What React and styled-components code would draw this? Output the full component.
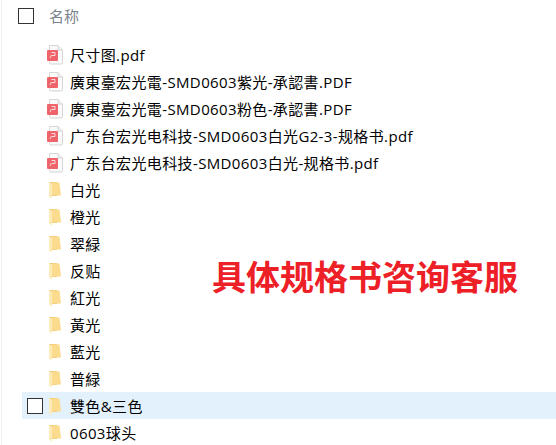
import React from 'react';
import styled, { createGlobalStyle } from 'styled-components';

const Global = createGlobalStyle`
    html, body {
        margin: 0;
        padding: 0;
        background: #fff;
    }
`;

const Page = styled.div`
    position: relative;
    width: 555px;
    height: 445px;
    overflow: hidden;
    box-sizing: border-box;
    border-left: 1px solid #f0f0f0;
    margin-left: 1px;
    font-family: "Open Sans", "Noto Sans CJK SC", sans-serif;
`;

const Header = styled.div`
    height: 41px;
    box-sizing: border-box;
    padding: 8px 0 0 16px;
    display: flex;
    align-items: flex-start;
    gap: 15px;
`;

const Check = styled.span`
    display: block;
    flex: none;
    width: 16px;
    height: 16px;
    box-sizing: border-box;
    border: 1px solid #333;
    background: #fff;
`;

const HeaderLabel = styled.span`
    font-size: 15px;
    line-height: 17px;
    color: #7b838c;
`;

const List = styled.div`
    margin-left: 20px;
`;

const Row = styled.div`
    position: relative;
    height: 27px;
    display: flex;
    align-items: center;
    padding-left: 25px;
    gap: 7px;
    background: ${(p) => (p.$active ? '#e3f1fc' : 'transparent')};
    font-size: 15px;
    letter-spacing: .37px;
    color: #000;
`;

const RowCheck = styled(Check)`
    position: absolute;
    left: 5px;
    top: 6px;
`;

const IconSlot = styled.span`
    flex: none;
    width: 16px;
    height: 20px;
    display: flex;
`;

const Name = styled.span`
    white-space: nowrap;
    line-height: 20px;
`;

const Notice = styled.div`
    position: absolute;
    left: 210px;
    top: 254px;
    font-family: "Noto Sans CJK SC", sans-serif;
    font-size: 34px;
    line-height: 44px;
    font-weight: 700;
    color: #ee2027;
    white-space: nowrap;
`;

const PdfIcon = () => (
    <svg width="16" height="20" viewBox="0 0 16 20">
        <path d="M2.5 .5H11L15.5 5V17.5a1.5 1.5 0 0 1-1.5 1.5H4A1.5 1.5 0 0 1 2.5 17.5Z" fill="#fafafa" stroke="#d6d6d6" />
        <path d="M11 .5V5H15.5" fill="#eee" stroke="#d6d6d6" />
        <rect x="0" y="5" width="11" height="11" rx="1" fill="#ef636b" />
        <path d="M4.5 7.5h3.5v3H5M3 13l1.5-3" fill="none" stroke="#fbdcde" strokeWidth="1" />
    </svg>
);

const FolderIcon = () => (
    <svg width="16" height="20" viewBox="0 0 16 20">
        <path d="M2 2H10V16H2Z" fill="#eec46c" />
        <path d="M5 2.5H12.5L14 15.5H5Z" fill="#fbdc8e" />
        <path d="M2 2L5 3.5V18.5L2 16.5Z" fill="#fcebb8" />
    </svg>
);

const files = [
    { type: 'pdf', name: '尺寸图.pdf' },
    { type: 'pdf', name: '廣東臺宏光電-SMD0603紫光-承認書.PDF' },
    { type: 'pdf', name: '廣東臺宏光電-SMD0603粉色-承認書.PDF' },
    { type: 'pdf', name: '广东台宏光电科技-SMD0603白光G2-3-规格书.pdf' },
    { type: 'pdf', name: '广东台宏光电科技-SMD0603白光-规格书.pdf' },
    { type: 'dir', name: '白光' },
    { type: 'dir', name: '橙光' },
    { type: 'dir', name: '翠緑' },
    { type: 'dir', name: '反贴' },
    { type: 'dir', name: '紅光' },
    { type: 'dir', name: '黃光' },
    { type: 'dir', name: '藍光' },
    { type: 'dir', name: '普緑' },
    { type: 'dir', name: '雙色&三色', active: true },
    { type: 'dir', name: '0603球头' },
];

const App = () => {
    return (
        <Page>
            <Global />
            <Header>
                <Check />
                <HeaderLabel>名称</HeaderLabel>
            </Header>
            <List>
                {files.map((f) => (
                    <Row key={f.name} $active={f.active}>
                        {f.active && <RowCheck />}
                        <IconSlot>{f.type === 'pdf' ? <PdfIcon /> : <FolderIcon />}</IconSlot>
                        <Name>{f.name}</Name>
                    </Row>
                ))}
            </List>
            <Notice>具体规格书咨询客服</Notice>
        </Page>
    );
};

export default App;
